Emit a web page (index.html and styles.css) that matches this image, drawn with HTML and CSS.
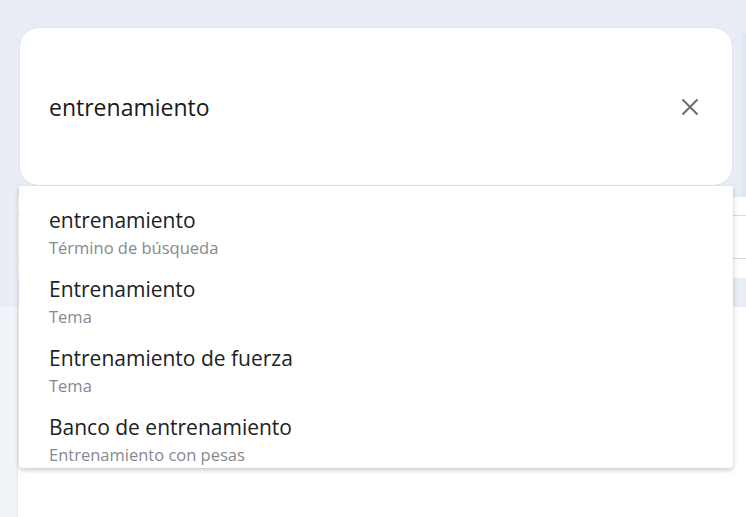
FILE: index.html
```html
<!DOCTYPE html>
<html lang="es">
<head>
<meta charset="utf-8">
<title>Buscar</title>
<link rel="stylesheet" href="styles.css">
</head>
<body>
<div class="page">
  <div class="band">
    <div class="side-row"><div class="side-card"></div></div>
    <div class="table">
      <div class="table-row"></div>
      <div class="table-row"></div>
    </div>
  </div>
  <div class="lower">
    <div class="lower-strip"></div>
    <div class="lower-main"></div>
  </div>
</div>

<div class="modal">
  <div class="search-card">
    <span class="query">entrenamiento</span>
    <button class="clear" aria-label="Borrar">
      <svg width="24" height="24" viewBox="0 0 24 24"><path d="M4.5 4.5 L19.5 19.5 M19.5 4.5 L4.5 19.5" stroke="#6f6f6f" stroke-width="2.1" fill="none"/></svg>
    </button>
  </div>
  <ul class="suggestions">
    <li class="item"><span class="title">entrenamiento</span><span class="sub">Término de búsqueda</span></li>
    <li class="item"><span class="title">Entrenamiento</span><span class="sub">Tema</span></li>
    <li class="item"><span class="title">Entrenamiento de fuerza</span><span class="sub">Tema</span></li>
    <li class="item"><span class="title">Banco de entrenamiento</span><span class="sub">Entrenamiento con pesas</span></li>
  </ul>
</div>
</body>
</html>
```

FILE: styles.css
```css
* { box-sizing: border-box; }
html, body { margin: 0; padding: 0; }
body {
  width: 746px;
  height: 517px;
  overflow: hidden;
  position: relative;
  background: #ffffff;
  font-family: "Open Sans", "Noto Sans", sans-serif;
}

.page { display: flex; flex-direction: column; height: 517px; }

.band {
  height: 307px;
  background: #e8ecf4;
  padding-top: 33px;
  display: flex;
  flex-direction: column;
}
.side-row { display: flex; justify-content: flex-end; height: 164px; }
.side-card {
  width: 4px;
  height: 164px;
  background: #dfe6f4;
  border-top-left-radius: 8px;
}
.table {
  margin-left: 18px;
  height: 81px;
  background: #ffffff;
  padding-top: 18px;
}
.table-row { height: 43px; border-top: 1px solid #d6d9de; }

.lower { flex: 1; display: flex; }
.lower-strip { width: 18px; background: #f0f3f8; box-shadow: inset -1px 0 1px rgba(0,0,0,0.05); }
.lower-main { flex: 1; background: #ffffff; }

.modal {
  position: absolute;
  top: 27px;
  left: 19px;
  width: 714px;
}

.search-card {
  height: 159px;
  background: #ffffff;
  border: 1px solid #e3e6ec;
  border-radius: 20px;
  display: flex;
  align-items: center;
  padding: 0 29px;
}
.query {
  flex: 1;
  font-size: 23px;
  line-height: 30px;
  color: #1a1a1a;
}
.clear {
  border: 0;
  background: none;
  padding: 0;
  width: 24px;
  height: 24px;
  margin-right: 1px;
  display: flex;
}

.suggestions {
  list-style: none;
  margin: 0;
  padding: 21px 0 3px;
  background: #ffffff;
  box-shadow: 0 2px 5px rgba(0,0,0,0.22);
  border-radius: 0 0 4px 4px;
  display: flex;
  flex-direction: column;
  gap: 18px;
}
.item { display: flex; flex-direction: column; gap: 5px; padding: 0 30px; }
.title { font-size: 21px; line-height: 26px; color: #202124; }
.sub { font-size: 16.5px; line-height: 20px; color: #85898e; }
```
